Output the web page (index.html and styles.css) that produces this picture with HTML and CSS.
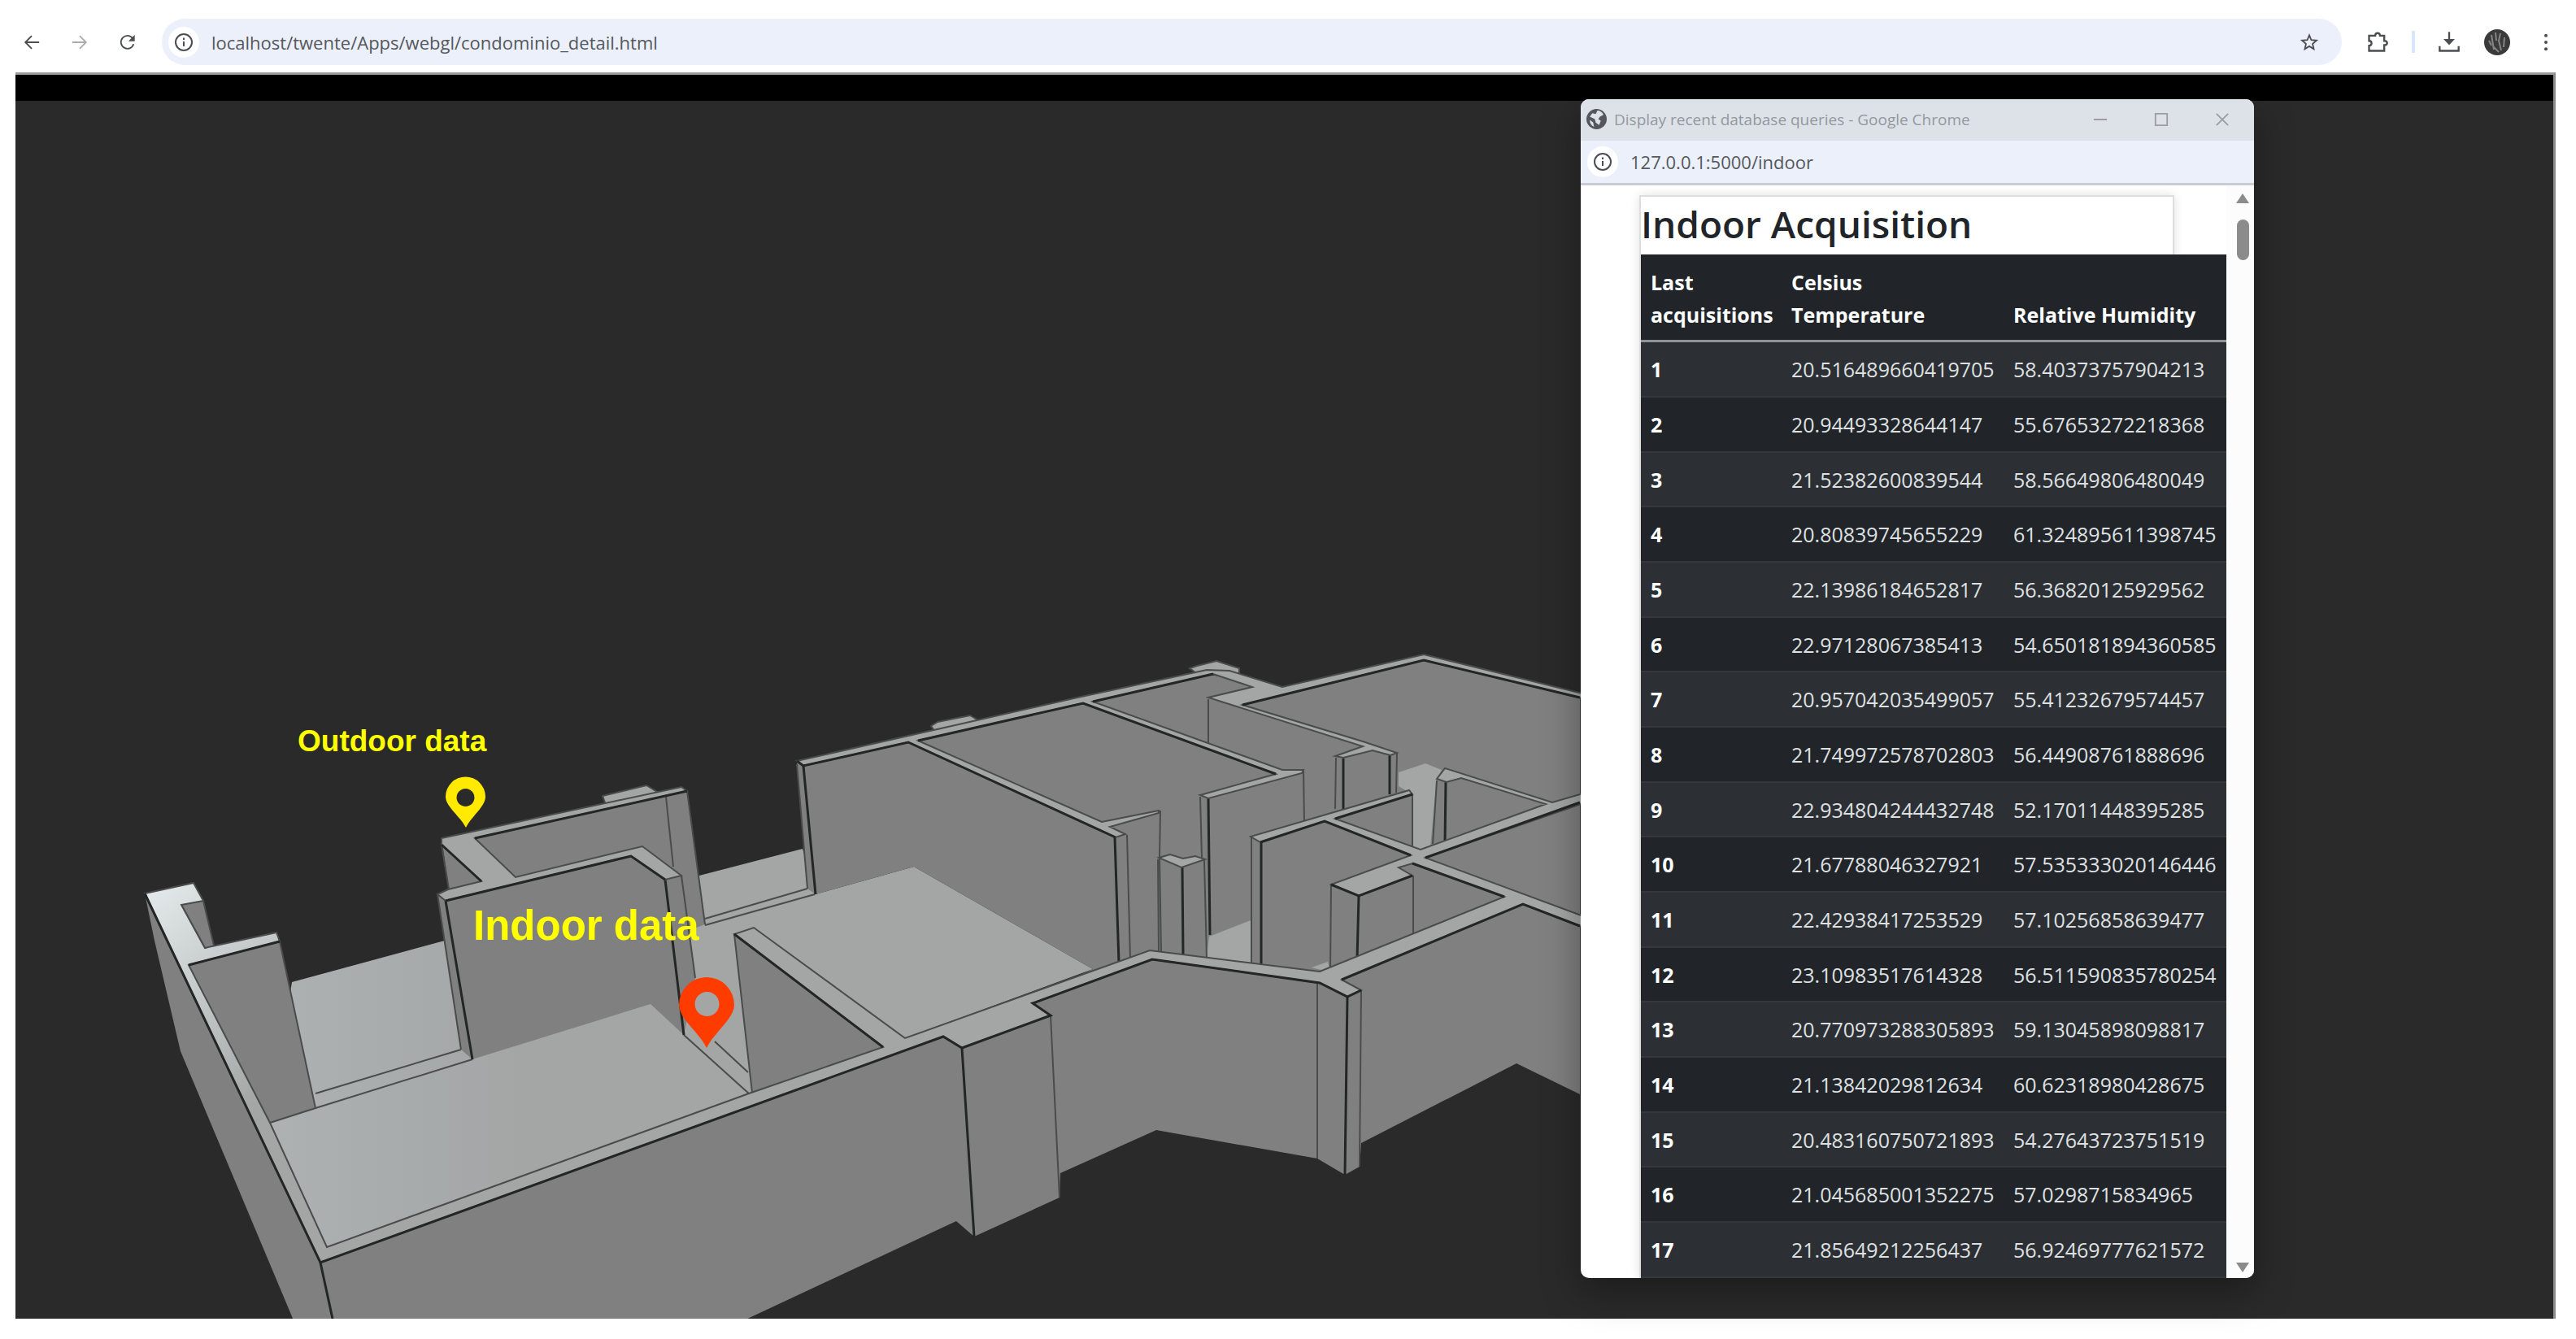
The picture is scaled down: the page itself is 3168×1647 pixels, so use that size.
FILE: index.html
```html
<!DOCTYPE html>
<html lang="en">
<head>
<meta charset="utf-8">
<title>condominio_detail</title>
<link rel="stylesheet" href="styles.css">
</head>
<body>
<header class="toolbar">
  <nav class="nav-buttons">
    <button class="icon-btn" aria-label="Back"><svg viewBox="0 0 24 24"><path d="M22 12H4M12 3.500 3.500 12l8.500 8.500"/></svg></button>
    <button class="icon-btn muted" aria-label="Forward"><svg viewBox="0 0 24 24"><path d="M2 12h18M12 3.500l8.500 8.500-8.500 8.500"/></svg></button>
    <button class="icon-btn" aria-label="Reload"><svg viewBox="0 0 24 24"><path d="M20 14.500A8.700 8.700 0 1 1 19 7"/><path class="solid" d="M21.500 2v8.500H13z"/></svg></button>
  </nav>
  <div class="omnibox">
    <span class="site-info"><svg viewBox="0 0 24 24"><circle cx="12" cy="12" r="10"/><path d="M12 11v6M12 6.500v2.500"/></svg></span>
    <input class="address" type="text" aria-label="Address" value="localhost/twente/Apps/webgl/condominio_detail.html">
    <button class="icon-btn" aria-label="Bookmark"><svg viewBox="0 0 24 24"><path d="M12 2.500l2.700 6.500 7 .6-5.300 4.600 1.600 6.900-6-3.700-6 3.700 1.600-6.900L2.300 9.600l7-.6z"/></svg></button>
  </div>
  <div class="actions">
    <button class="icon-btn big" aria-label="Extensions"><svg viewBox="0 0 24 24"><path d="M3 5h6.500c0-3.500 5-3.500 5 0H19v5.500c4 0 4 4.500 0 4.500v6H3v-5.500c3.500 0 3.500-5 0-5z"/></svg></button>
    <span class="divider"></span>
    <button class="icon-btn big" aria-label="Downloads"><svg viewBox="0 0 24 24"><path d="M12 1v9M2 16v5h20v-5"/><path class="solid" d="M6 8.500h12l-6 6.500z"/></svg></button>
    <button class="avatar" aria-label="Profile"><svg viewBox="0 0 32 32"><circle class="disc" cx="16" cy="16" r="16"/><path class="streak" d="M9 7l3 18M14 4l1 10M20 5l-2 9 3 12M25 10l-1 12M6 14l3 6M12 22l6 6"/></svg></button>
    <button class="icon-btn" aria-label="Menu"><svg viewBox="0 0 24 24"><circle class="solid" cx="12" cy="3" r="2.200"/><circle class="solid" cx="12" cy="12" r="2.200"/><circle class="solid" cx="12" cy="21" r="2.200"/></svg></button>
  </div>
</header>

<main class="stage">
  <div class="topbar"></div>
  <svg class="scene" viewBox="19 124 3121 1498" preserveAspectRatio="xMinYMin slice">
    <defs>
      <linearGradient id="glow" gradientUnits="userSpaceOnUse" x1="178" y1="1100" x2="360" y2="1320">
        <stop offset="0" stop-color="#e3e9ea"/><stop offset="1" stop-color="#a3a6a5"/>
      </linearGradient>
      <linearGradient id="floor" gradientUnits="userSpaceOnUse" x1="340" y1="0" x2="640" y2="0">
        <stop offset="0" stop-color="#aeb1b2"/><stop offset="1" stop-color="#a3a6a5"/>
      </linearGradient>
    </defs>

    <!-- floors of the left rooms -->
    <path fill="url(#floor)" d="M359 1208 543 1158 860 1077 987 1044 1003 1100 1124 1066 1344 1192 1113 1277 922 1346 402 1534 332 1381z"/>

    <!-- walls -->
    <g class="wall">
      <path d="M178 1099 190 1157 222 1293 361 1624H409L394 1553z"/>
      <path d="M394 1553 1160 1275 1190 1290 1176 1502 915 1624H409z"/>
      <path d="M980 936 1325 860 1474 827 1577 848 1751 808 1943 856V1346L1865 1308 1674 1406 1672 1435 1654 1445 1620 1425 1422 1390 1304 1443 1303 1473 1198 1521 1176 1502 1160 1275 1344 1192 1124 1066 1003 1100 993 1093z"/>
      <path d="M223 1113 250 1108 263 1163 252 1166z"/>
      <path d="M232 1187 344 1158 388 1363 332 1381z"/>
      <path d="M543 1031 838 968 845 973 867 1137 846 1145 700 1140 552 1094z"/>
      <path d="M538 1100 548 1108 776 1053 818 1082 838 1077 855 1203 841 1273 800 1235 581 1303 567 1291z"/>
      <path d="M903 1149 1086 1288 925 1344z"/>
    </g>

    <!-- floors seen through doorways -->
    <g class="light">
      <path d="M1720 950 1753 939 1773 947 1767 958 1759 1042 1747 1045 1737 1042V977L1720 967z"/>
      <path d="M1487 1152 1538 1132V1185L1484 1177z"/>
      <path d="M1613 1190 1633 1183 1636 1196z"/>
    </g>

    <!-- thin edges -->
    <g class="thin">
      <path d="M250 1108 263 1163M223 1113 252 1166M344 1158 388 1363 332 1381M388 1345 567 1291M388 1363 581 1303M567 1291 538 1100"/>
      <path d="M867 1130 993 1093M867 1138 1002 1100M993 1093 980 940M845 973 867 1137M819 980 828 1066M838 1077 855 1203"/>
      <path d="M841 1273 922 1346M879 1281 920 1319M903 1149 925 1344M543 1039 552 1094"/>
      <path d="M1386 1027 1390 1180M1427 997 1426 1055 1428 1170M1424 1057 1425 1170M1481 1058 1484 1179M1476 980 1478 1055M1603 948 1604 1012M1486 860V917"/>
      <path d="M1539 1030V1185M1643 932 1642 995M1718 927 1717 975M1737 977V1045M1767 960 1762 1038M1637 1088 1636 1194M1738 1077V1152"/>
      <path d="M1292 1249 1303 1473M1620 1209V1425M1674 1218 1672 1435"/>
    </g>
    <g class="thick">
      <path d="M548 1108 581 1303M818 1082 841 1273M988 942 1003 1100M1371 1030 1376 1185M1454 1067 1455 1175M1486 982 1488 1150"/>
      <path d="M1551 1036V1188M1652 933V995M1709 928V977M1778 962 1777 1037M1671 1102 1669 1180M1183 1289 1198 1521M1657 1226 1654 1445M394 1553 409 1622"/>
    </g>

    <!-- wall tops -->
    <g class="top">
      <path fill="url(#glow)" d="M178 1099 238 1086 250 1108 223 1113 252 1166 340 1147 344 1158 232 1187 332 1381 402 1534 921 1345 1086 1288 903 1149 927 1141 1113 1277 1414 1169 1623 1195 1850 1103 1737 1062 1720 1067 1737 1077 1671 1102 1637 1088 1735 1052 1629 1010 1550 1036 1538 1029 1733 972 1737 977 1642 1007 1747 1045 1901 989 1797 957 1779 962 1767 958 1777 945 1909 987 1950 975V987L1753 1055 1950 1128V1142L1873 1112 1650 1205 1674 1218 1657 1226 1623 1209 1417 1180 1270 1234 1292 1249 1183 1289 1160 1275 394 1553z"/>
      <path d="M741 979 795 966 813 977 745 990z"/>
      <path d="M543 1031 838 968 845 973 584 1031 634 1079 790 1041 838 1077 818 1082 776 1053 548 1108 538 1100 551 1094 592 1084 543 1039z"/>
      <path d="M1145 893 1153 888 1193 880 1208 889 1150 900z"/>
      <path d="M1463 822 1472 819 1496 813 1524 822 1524 828 1474 830z"/>
      <path d="M980 936 1325 858 1484 824 1512 825 1577 845 1751 805 1950 854V860L1751 812 1528 867 1676 912 1718 926 1710 929 1688 923 1652 932 1642 930 1676 918 1486 858 1540 845 1492 829 1344 863 1577 947 1603 947 1601 951 1486 982 1476 978 1569 952 1332 865 1129 911 1355 1011 1425 997V1000L1365 1017 1384 1026 1372 1030 1117 913 988 942z"/>
      <path d="M1425 1055 1439 1051 1455 1056 1470 1053 1482 1057 1453 1067z"/>
    </g>
    <g class="thick">
      <path d="M178 1099 394 1553 1160 1275 1183 1289 1292 1249 1270 1234 1417 1180 1623 1209 1657 1226 1674 1218M1650 1205 1873 1112 1943 1139"/>
      <path d="M232 1187 344 1158M903 1149 1086 1288M548 1108 776 1053 818 1082M584 1031 845 973M543 1039 592 1084M980 936 988 942 1117 913 1372 1030"/>
      <path d="M1129 911 1332 865 1569 952M1344 863 1492 829M1528 867 1751 812 1943 858M1550 1036 1629 1010 1735 1052M1642 1007 1737 977M1753 1055 1943 987M1637 1088 1671 1102 1737 1077M1737 1062 1850 1103"/>
    </g>

    <a class="marker outdoor" href="#outdoor">
      <text x="366" y="924">Outdoor data</text>
      <path fill-rule="evenodd" d="M573 1018C566 1004 548 992 548 980a24 24 0 0 1 49 0c0 12-17 24-24 38zM572 970a11 11 0 1 0 1 0z"/>
    </a>
    <a class="marker indoor" href="#indoor">
      <text x="582" y="1156">Indoor data</text>
      <path fill-rule="evenodd" d="M869 1289C860 1270 835 1253 835 1236a34 34 0 0 1 68 0c0 17-25 34-34 53zM869 1220a15 15 0 1 0 1 0z"/>
    </a>
  </svg>

  <section class="popup">
    <header class="titlebar">
      <svg class="globe" viewBox="0 0 24 24"><circle class="disc" cx="12" cy="12" r="12"/><path class="land" d="M13 2c3 0 6 2 7 5l-4 2-2 3 3 2-2 5-4-3-1-4-6-3 3-4 4 1z"/><path class="land" d="M4 13l4 3 1 5c-3-1-5-4-5-8z"/></svg>
      <h1 class="window-title">Display recent database queries - Google Chrome</h1>
      <button class="win-btn" aria-label="Minimize"><svg viewBox="0 0 20 20"><path d="M1 10h18"/></svg></button>
      <button class="win-btn" aria-label="Maximize"><svg viewBox="0 0 20 20"><path d="M2 2h16v16H2z"/></svg></button>
      <button class="win-btn" aria-label="Close"><svg viewBox="0 0 20 20"><path d="M2 2l16 16M18 2 2 18"/></svg></button>
    </header>
    <div class="popup-address">
      <span class="site-info"><svg viewBox="0 0 24 24"><circle cx="12" cy="12" r="10"/><path d="M12 11v6M12 6.500v2.500"/></svg></span>
      <input class="address" type="text" aria-label="Popup address" value="127.0.0.1:5000/indoor">
    </div>
    <div class="popup-body">
      <div class="page">
        <div class="card">
          <h2>Indoor Acquisition</h2>
          <table>
            <thead><tr><th class="col-id">Last acquisitions</th><th class="col-temp">Celsius<br>Temperature</th><th>Relative Humidity</th></tr></thead>
            <tbody>
              <tr><th>1</th><td>20.516489660419705</td><td>58.40373757904213</td></tr>
              <tr><th>2</th><td>20.94493328644147</td><td>55.67653272218368</td></tr>
              <tr><th>3</th><td>21.52382600839544</td><td>58.56649806480049</td></tr>
              <tr><th>4</th><td>20.80839745655229</td><td>61.324895611398745</td></tr>
              <tr><th>5</th><td>22.13986184652817</td><td>56.36820125929562</td></tr>
              <tr><th>6</th><td>22.97128067385413</td><td>54.650181894360585</td></tr>
              <tr><th>7</th><td>20.957042035499057</td><td>55.41232679574457</td></tr>
              <tr><th>8</th><td>21.749972578702803</td><td>56.44908761888696</td></tr>
              <tr><th>9</th><td>22.934804244432748</td><td>52.17011448395285</td></tr>
              <tr><th>10</th><td>21.67788046327921</td><td>57.535333020146446</td></tr>
              <tr><th>11</th><td>22.42938417253529</td><td>57.10256858639477</td></tr>
              <tr><th>12</th><td>23.10983517614328</td><td>56.511590835780254</td></tr>
              <tr><th>13</th><td>20.770973288305893</td><td>59.13045898098817</td></tr>
              <tr><th>14</th><td>21.13842029812634</td><td>60.62318980428675</td></tr>
              <tr><th>15</th><td>20.483160750721893</td><td>54.27643723751519</td></tr>
              <tr><th>16</th><td>21.045685001352275</td><td>57.0298715834965</td></tr>
              <tr><th>17</th><td>21.85649212256437</td><td>56.92469777621572</td></tr>
            </tbody>
          </table>
        </div>
      </div>
      <div class="scrollbar">
        <span class="arrow up"></span>
        <span class="thumb"></span>
        <span class="arrow down"></span>
      </div>
    </div>
  </section>
</main>
</body>
</html>
```
FILE: styles.css
```css
* { box-sizing: border-box; }

body {
  margin: 0;
  height: 100vh;
  display: flex;
  flex-direction: column;
  background: #fff;
  font-family: "Open Sans", "Noto Sans", sans-serif;
  overflow: hidden;
}

button, input { font: inherit; border: 0; padding: 0; background: none; }
svg { display: block; }

/* browser toolbar */
.toolbar {
  height: 89px;
  flex: none;
  display: flex;
  align-items: center;
  padding: 14px 17px 0 19px;
}
.nav-buttons { display: flex; gap: 19px; margin-right: 22px; }
.icon-btn { width: 40px; height: 40px; display: grid; place-items: center; }
.icon-btn svg { width: 22px; height: 22px; }
.icon-btn.big svg { width: 28px; height: 28px; }
.icon-btn svg, .site-info svg {
  fill: none;
  stroke: #4b4d50;
  stroke-width: 2;
  overflow: visible;
}
.icon-btn .solid { fill: #4b4d50; stroke: none; }
.icon-btn.muted svg { stroke: #a9abad; }
.omnibox {
  flex: 1;
  height: 57px;
  display: flex;
  align-items: center;
  padding: 0 20px 0 8px;
  border-radius: 29px;
  background: #ebf0fa;
}
.site-info {
  width: 38px;
  height: 38px;
  flex: none;
  display: grid;
  place-items: center;
  border-radius: 50%;
  background: #fff;
}
.site-info svg { width: 24px; height: 24px; }
.address { flex: 1; min-width: 0; color: #55585c; font-size: 22px; outline: 0; }
.omnibox .address { margin-left: 15px; }
.actions { display: flex; align-items: center; margin-left: 24px; }
.divider { width: 4px; height: 27px; margin: 0 22px; background: #d7e5fb; }
.avatar { width: 32px; height: 32px; margin: 0 24px 0 23px; }
.avatar .disc { fill: #3a3a3a; }
.avatar .streak { fill: none; stroke: #858585; stroke-width: 2; }

/* 3D view */
.stage {
  position: relative;
  flex: 1;
  min-height: 0;
  display: flex;
  flex-direction: column;
  margin: 0 25px 25px 19px;
  border-top: 3px solid #9c9c9c;
  border-right: 3px solid #8c8c8c;
  background: #2a2a2a;
}
.topbar { height: 32px; flex: none; background: #000; }
.scene { width: 100%; flex: 1; min-height: 0; }
.wall { fill: #808080; }
.light, .top { fill: #a3a6a5; }
.top { stroke: #4a4b4b; stroke-width: 2; }
.thin, .thick { fill: none; stroke: #4a4b4b; stroke-width: 2; }
.thick { stroke: #242626; stroke-width: 3; }
.marker text { fill: #ff0; font-family: "Liberation Sans", Arial, sans-serif; font-weight: 700; }
.outdoor text { font-size: 37px; }
.indoor text { font-size: 51px; }
.outdoor path { fill: #ffea00; }
.indoor path { fill: #ff3c00; }

/* popup window */
.popup {
  position: absolute;
  top: 30px;
  right: 368px;
  bottom: 50px;
  width: 828px;
  display: flex;
  flex-direction: column;
  border-radius: 10px;
  overflow: hidden;
  background: #fff;
  box-shadow: 0 16px 48px rgba(0, 0, 0, .35);
}
.titlebar {
  height: 51px;
  flex: none;
  display: flex;
  align-items: center;
  padding: 0 2px 2px 7px;
  background: #dde2e9;
}
.globe { width: 25px; height: 25px; }
.globe .disc { fill: #54585d; }
.globe .land { fill: #dde2e9; }
.window-title { flex: 1; margin: 0 0 0 9px; font-size: 19px; font-weight: 400; color: #94989d; }
.win-btn { width: 75px; height: 48px; display: grid; place-items: center; }
.win-btn svg { width: 18px; height: 18px; fill: none; stroke: #9a9ea3; stroke-width: 2; }
.popup-address {
  height: 55px;
  flex: none;
  display: flex;
  align-items: center;
  padding-left: 8px;
  background: #ebf0fa;
  border-bottom: 3px solid #c8ccd3;
}
.popup-address .address { margin-left: 15px; }
.popup-body { flex: 1; min-height: 0; display: flex; }
.page { flex: 1; min-width: 0; padding: 12px 0 0 72px; overflow: hidden; }
.card {
  width: 658px;
  border: 2px solid #dedede;
  box-shadow: 0 0 12px rgba(0, 0, 0, .12);
}
h2 {
  height: 71px;
  margin: 0;
  font-size: 46px;
  line-height: 66px;
  font-weight: 600;
  color: #212529;
}
table {
  width: 720px;
  table-layout: fixed;
  border-collapse: separate;
  border-spacing: 0;
  background: #212529;
  color: #fff;
  font-size: 25px;
  line-height: 40px;
}
.col-id { width: 173px; }
.col-temp { width: 273px; }
th, td {
  height: 68px;
  padding: 0 0 0 12px;
  text-align: left;
  vertical-align: middle;
  border-bottom: 2px solid #32383e;
}
td { color: #dfe0e1; }
tbody tr:nth-child(3n) > * { height: 67px; }
tbody tr:nth-child(odd) { background: #2c3034; }
thead th {
  height: 108px;
  padding-bottom: 11px;
  vertical-align: bottom;
  border-bottom: 3px solid #909497;
}
.scrollbar {
  width: 34px;
  display: flex;
  flex-direction: column;
  align-items: center;
  padding: 10px 0 7px 6px;
  background: #fcfcfc;
}
.arrow { border: 8px solid transparent; }
.arrow.up { border-top: 0; border-bottom: 12px solid #8b8b8b; }
.arrow.down { margin-top: auto; border-bottom: 0; border-top: 12px solid #8b8b8b; }
.thumb { width: 15px; height: 50px; margin-top: 20px; border-radius: 8px; background: #8b8b8b; }
```
